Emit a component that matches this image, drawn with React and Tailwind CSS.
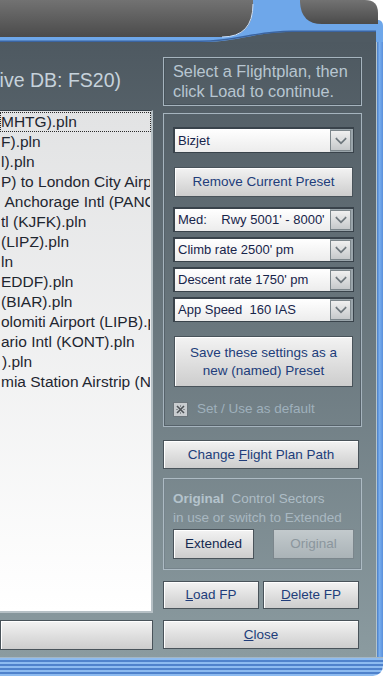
import React from 'react'

const rows = [
  ['MHTG).pln', 'pl-0'],
  ['F).pln', 'pl-0'],
  ['l).pln', 'pl-0'],
  ['P) to London City Airport (EGLC).pln', 'pl-0'],
  [' Anchorage Intl (PANC).pln', 'pl-0'],
  ['tl (KJFK).pln', 'pl-0'],
  ['(LIPZ).pln', 'pl-0'],
  ['ln', 'pl-0'],
  ['EDDF).pln', 'pl-0'],
  ['(BIAR).pln', 'pl-0'],
  ['olomiti Airport (LIPB).pln', 'pl-0'],
  ['ario Intl (KONT).pln', 'pl-0'],
  [').pln', 'pl-[1px]'],
  ['mia Station Airstrip (NZPG).pln', 'pl-0'],
]

const Btn = ({ children, className = '', disabled }) => (
  <button
    className={`flex items-center justify-center border text-[13.5px] leading-[18px] ${
      disabled
        ? 'border-[#7b868c] bg-linear-to-b from-[#c3cacd] to-[#aab3b7] text-[#8b969d]'
        : 'border-[#49535a] bg-linear-to-b from-[#f3f3f3] to-[#cdcdcd] text-[#213d7a] shadow-[inset_1px_1px_0_#ffffff]'
    } ${className}`}
  >
    {children}
  </button>
)

const Select = ({ text, className = '' }) => (
  <div className={`flex border border-[#39434b] border-t-2 border-l-2 bg-[#9aa5ab] ${className}`}>
    <div className="flex-1 flex items-center overflow-hidden whitespace-pre bg-linear-to-b from-white to-[#ececec] pl-[3px] text-[13px] text-[#17244a]">
      {text}
    </div>
    <div className="w-[21px] my-[1px] mr-[2px] flex items-center justify-center border border-[#7d878c] bg-linear-to-b from-[#f0f0f0] to-[#c6c9cb]">
      <svg width="14" height="10" viewBox="0 0 14 10">
        <path d="M2 2 L7 7 L12 2" fill="none" stroke="#6f787e" strokeWidth="2.2" />
        <path d="M3 1.5 L7 5.5 L11 1.5" fill="none" stroke="#ffffff" strokeWidth="0.8" />
      </svg>
    </div>
  </div>
)

export default function App() {
  return (
    <div className="w-[390px] h-[676px] bg-white overflow-hidden font-['Liberation_Sans',Arial,sans-serif]">
      <div className="w-[383px] h-full flex flex-col rounded-br-[10px] overflow-hidden">
        <svg width="383" height="42" viewBox="0 0 383 42" className="block shrink-0">
          <defs>
            <linearGradient id="tab" x1="0" y1="0" x2="0" y2="1">
              <stop offset="0" stopColor="#727272" />
              <stop offset="1" stopColor="#4b4b4b" />
            </linearGradient>
          </defs>
          <path d="M0 0 H320 V20 H379 Q383 21 383 26 V42 H0 Z" fill="#6ea7ea" />
          <path d="M0 0 H253 V6 Q253 37 222 37 H0 Z" fill="url(#tab)" />
          <path d="M253 4 Q253 37 222 37" fill="none" stroke="#cfe2fa" strokeWidth="1" />
          <path d="M300 0 H365 Q378 0 378 13 V24 H322 Q301 24 300 2 Z" fill="url(#tab)" />
          <path d="M200 42 C240 42 252 32 292 32 H376 V42 Z" fill="#4f5a62" />
          <path d="M0 41.3 H200 C240 41.3 252 31.3 292 31.3 H376" fill="none" stroke="#3b64a0" strokeWidth="1.4" />
        </svg>
        <div className="flex-1 flex">
          <div className="flex-1 flex gap-[10px] bg-linear-to-b from-[#4e5961] to-[#8b9ba0]">
            <div className="w-[153px] flex flex-col overflow-hidden">
              <div className="h-[68px] flex items-start justify-end pt-[27px] pr-[32px] whitespace-nowrap text-[19.5px] leading-[22px] text-[#c6d2db]">
                Flight Plans (Active DB: FS20)
              </div>
              <div className="h-[503px] border-t border-t-[#37414a] border-r-2 border-r-[#b6c0c5] border-b-2 border-b-[#b6c0c5] bg-linear-to-b from-[#e2e3e4] to-white pt-[1px] overflow-hidden">
                {rows.map(([t, pl], i) => (
                  <div
                    key={i}
                    className={`h-[20px] leading-[18px] whitespace-pre overflow-hidden text-[15.5px] text-[#1f2630] ${pl} ${
                      i === 0 ? 'border border-dotted border-[#2a2a2a]' : 'border border-transparent'
                    }`}
                  >
                    {t}
                  </div>
                ))}
              </div>
              <Btn className="mt-[7px] h-[30px] w-full border-[#3f4a51]" />
            </div>

            <div className="w-[199px] flex flex-col pt-[15px]">
              <div className="h-[49px] border border-[#a6b4be] shadow-[inset_0_0_0_1px_#46525a] pl-[9px] pt-[3px] text-[16.3px] leading-[20px] text-[#b8c6d1]">
                Select a Flightplan, then
                <br />
                click Load to continue.
              </div>

              <div className="mt-[7px] h-[314px] border border-[#a6b4be] shadow-[inset_0_0_0_1px_#56626a] pl-[9px] pr-[7px] pt-[13px] flex flex-col">
                <Select text="Bizjet" className="h-[26px]" />
                <Btn className="mt-[14px] mx-[1px] h-[30px]">Remove Current Preset</Btn>
                <Select text="Med:    Rwy 5001' - 8000'" className="mt-[10px] h-[25px]" />
                <Select text="Climb rate 2500' pm" className="mt-[5px] h-[25px]" />
                <Select text="Descent rate 1750' pm" className="mt-[5px] h-[25px]" />
                <Select text="App Speed  160 IAS" className="mt-[5px] h-[25px]" />
                <Btn className="mt-[14px] mx-[1px] h-[51px] flex-col">
                  <span>Save these settings as a</span>
                  <span>new (named) Preset</span>
                </Btn>
                <div className="mt-[12px] flex items-center gap-[9px]">
                  <div className="w-[15px] h-[15px] border border-[#6c757b] bg-[#c8cccf] flex items-center justify-center">
                    <svg width="11" height="11" viewBox="0 0 11 11">
                      <path d="M2 2 L9 9 M9 2 L2 9" stroke="#4d5256" strokeWidth="1.6" />
                      <path d="M5.5 1 V3 M5.5 8 V10 M1 5.5 H3 M8 5.5 H10" stroke="#8a8f93" strokeWidth="1" />
                    </svg>
                  </div>
                  <span className="text-[13.5px] text-[#9fb0bc]">Set / Use as default</span>
                </div>
              </div>

              <Btn className="mt-[13px] h-[29px] w-[196px]">
                Change&nbsp;<u>F</u>light Plan Path
              </Btn>

              <div className="mt-[9px] h-[92px] border border-[#adbbc4] shadow-[inset_0_0_0_1px_#76848c] pl-[9px] pt-[10px] flex flex-col">
                <div className="text-[13.5px] leading-[19px] whitespace-pre text-[#aebdc6]">
                  <span className="font-bold text-[#b4c3cc]">Original</span>  Control Sectors
                </div>
                <div className="text-[13.5px] leading-[19px] text-[#a9b8c1]">in use or switch to Extended</div>
                <div className="mt-[2px] flex gap-[19px]">
                  <Btn className="w-[81px] h-[30px] text-[#15294f]">Extended</Btn>
                  <Btn disabled className="w-[81px] h-[30px]">Original</Btn>
                </div>
              </div>

              <div className="mt-[11px] flex gap-[4px]">
                <Btn className="w-[96px] h-[28px]">
                  <u>L</u>oad FP
                </Btn>
                <Btn className="w-[96px] h-[28px]">
                  <u>D</u>elete FP
                </Btn>
              </div>

              <Btn className="mt-[11px] h-[29px] w-[196px]">
                <u>C</u>lose
              </Btn>
            </div>
          </div>
          <div className="w-[7px] bg-linear-to-r from-[#3a6bb4] via-[#78aef0] to-[#5a90da] shadow-[inset_1px_0_0_#b3c3cc]" />
        </div>
        <div className="h-[19px] shrink-0 border-t border-t-[#a4b6c4] bg-[repeating-linear-gradient(180deg,#8dbbf0_0px,#8dbbf0_2px,#4f82cc_2px,#4f82cc_4px)]" />
      </div>
    </div>
  )
}
